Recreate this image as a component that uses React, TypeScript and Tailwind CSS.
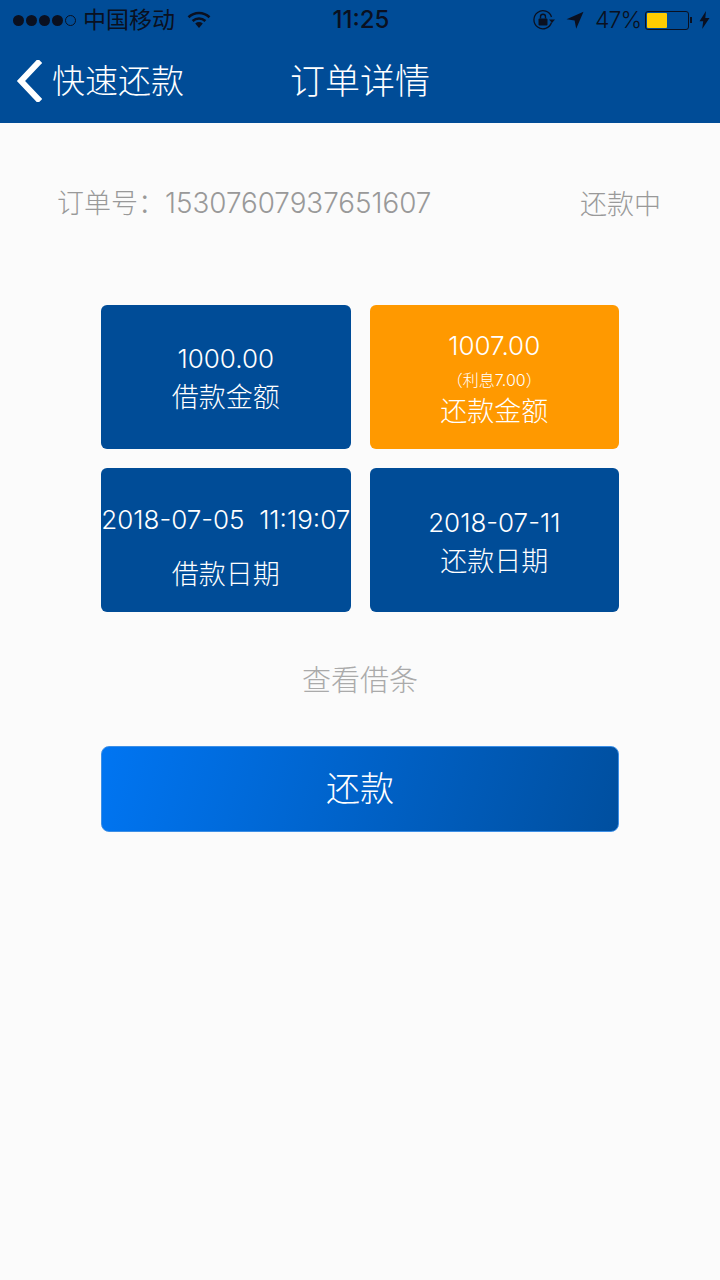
const font = "font-['Inter','Noto_Sans_CJK_SC',sans-serif]";

function Signal() {
  return (
    <div className="flex items-center gap-[2px]">
      {[0, 1, 2, 3].map((i) => (
        <div key={i} className="w-[11px] h-[11px] rounded-full bg-[#0a1020]" />
      ))}
      <div className="w-[11px] h-[11px] rounded-full border border-[#0a1020]" />
    </div>
  );
}

function StatusBar() {
  return (
    <div className="h-[40px] flex items-center justify-between pl-[13px] pr-[10px] text-[#0a1020] relative">
      <div className="flex items-center">
        <Signal />
        <span className="ml-[7px] text-[23px] leading-none">中国移动</span>
        <svg className="ml-[12px]" width="24" height="18" viewBox="0 0 24 18">
          <path d="M1.5 6.2C7.6.6 16.4.6 22.5 6.2" fill="none" stroke="#0a1020" strokeWidth="2.6" />
          <path d="M5.6 10C9.4 6.6 14.6 6.6 18.4 10" fill="none" stroke="#0a1020" strokeWidth="2.6" />
          <path d="M8.2 12.4C10.6 10.6 13.4 10.6 15.8 12.4L12 17Z" fill="#0a1020" />
        </svg>
      </div>
      <span className="absolute left-[2px] right-0 text-center text-[24px] font-medium leading-none pointer-events-none">11:25</span>
      <div className="flex items-center">
        <svg width="24" height="22" viewBox="0 0 24 22">
          <path d="M19.5 13.5A9 9 0 1 1 19.5 8" fill="none" stroke="#0a1020" strokeWidth="1.3" />
          <path d="M17 10.5h6l-3 3.4Z" fill="#0a1020" />
          <rect x="6.5" y="9.5" width="9" height="7" rx="1" fill="#0a1020" />
          <path d="M8.5 9.5V7.8a2.5 2.5 0 0 1 5 0v1.7" fill="none" stroke="#0a1020" strokeWidth="1.4" />
        </svg>
        <svg className="ml-[10px]" width="18" height="18" viewBox="0 0 18 18">
          <path d="M17.5.8 10.2 17.8 8.6 9.4.5 8.2Z" fill="#0a1020" />
        </svg>
        <span className="ml-[11px] text-[23px] leading-none font-light tracking-[-1px]">47%</span>
        <div className="ml-[4px] w-[44px] h-[19px] rounded-[3px] border border-[#0a1020] p-[1px]">
          <div className="w-[20px] h-full bg-[#ffcc00] rounded-[1px]" />
        </div>
        <div className="ml-[1px] w-[2px] h-[6px] bg-[#0a1020]" />
        <svg className="ml-[7px]" width="11" height="18" viewBox="0 0 11 18">
          <path d="M7 0 .5 10.2h3.7L3.2 18l7.3-11H6.3Z" fill="#0a1020" />
        </svg>
      </div>
    </div>
  );
}

function NavBar() {
  return (
    <div className="h-[83px] relative flex items-center justify-center text-white">
      <div className="absolute left-[16px] top-[20px] flex items-center">
        <svg width="26" height="42" viewBox="0 0 26 42">
          <path d="M22 3 5 21l17 18" fill="none" stroke="#fff" strokeWidth="6" strokeLinecap="square" />
        </svg>
        <span className="ml-[10px] text-[33px] leading-none font-light">快速还款</span>
      </div>
      <span className="text-[35px] leading-none font-light">订单详情</span>
    </div>
  );
}

function Card({ value, sub, label, orange, gap, top }: { value: string; sub?: string; label: string; orange?: boolean; gap: string; top: string }) {
  return (
    <div className={`h-[144px] rounded-[6px] flex flex-col items-center justify-center text-white ${top} ${orange ? "bg-[#ff9900]" : "bg-[#004c97]"}`}>
      <div className="text-[26px] leading-[30px] font-light whitespace-pre">{value}</div>
      {sub && <div className="text-[16px] leading-[20px] mt-[9px] font-light">{sub}</div>}
      <div className={`text-[27px] leading-[34px] font-light ${gap}`}>{label}</div>
    </div>
  );
}

export default function App() {
  return (
    <div className={`w-[720px] h-[1280px] bg-[#fbfbfb] flex flex-col ${font}`}>
      <div className="bg-[#004c97] h-[123px] shrink-0">
        <StatusBar />
        <NavBar />
      </div>
      <div className="mt-[63px] h-[36px] pl-[57px] pr-[59px] flex items-center justify-between text-[#999999] text-[27px] leading-none font-light">
        <span>
          订单号：<span className="text-[27.8px]">15307607937651607</span>
        </span>
        <span>还款中</span>
      </div>
      <div className="mt-[83px] mx-[101px] grid grid-cols-2 gap-x-[19px] gap-y-[19px]">
        <Card value="1000.00" label="借款金额" top="pt-[5px]" gap="mt-[7px]" />
        <Card value="1007.00" sub="（利息7.00）" label="还款金额" orange top="pt-[6px]" gap="mt-[5px]" />
        <Card value="2018-07-05  11:19:07" label="借款日期" top="pt-[16px]" gap="mt-[23px]" />
        <Card value="2018-07-11" label="还款日期" top="pt-[7px]" gap="mt-[7px]" />
      </div>
      <div className="mt-[49px] h-[38px] flex items-center justify-center text-[#aaaaaa] text-[29px] leading-none font-light">查看借条</div>
      <div className="mt-[47px] mx-[101px] h-[86px] rounded-[8px] border border-[#3d8fe6] bg-[linear-gradient(105deg,#0075f2,#004f9f)] flex items-center justify-center text-white text-[34px] leading-none font-light">还款</div>
    </div>
  );
}
